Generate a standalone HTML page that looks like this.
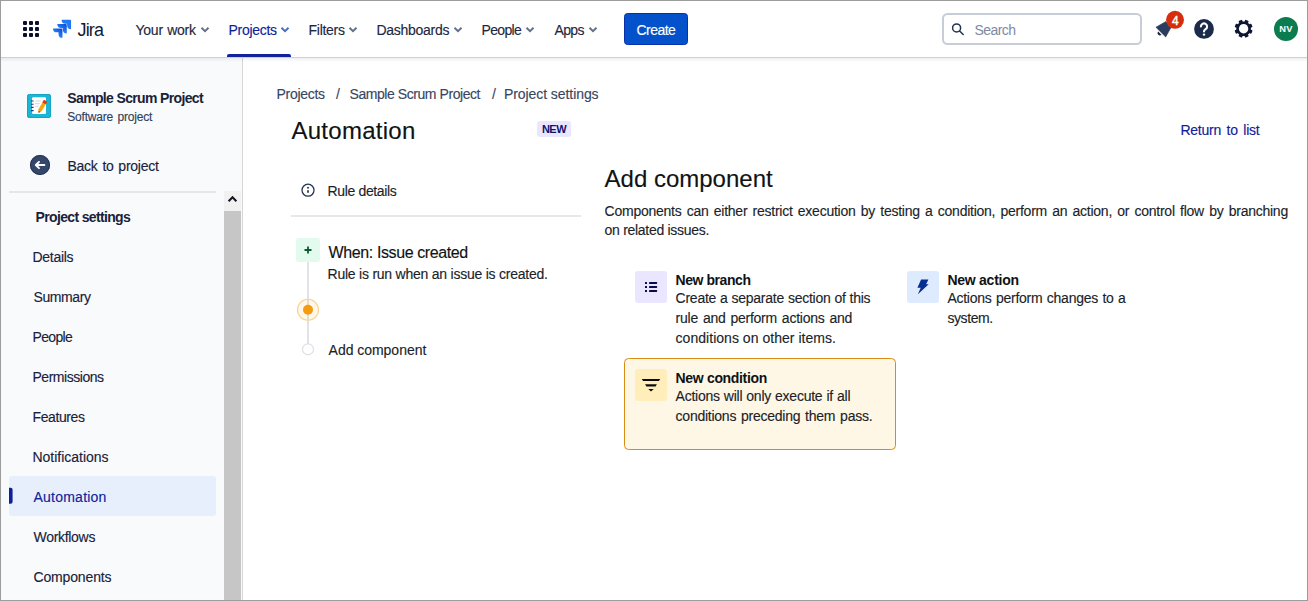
<!DOCTYPE html>
<html lang="en">
<head>
<meta charset="utf-8">
<title>Automation - Sample Scrum Project - Jira</title>
<style>
*{box-sizing:border-box;margin:0;padding:0}
html,body{width:1308px;height:601px;overflow:hidden;background:#fff}
body{font-family:"Liberation Sans",sans-serif;color:#172B4D;font-size:14px;position:relative}
.t{position:absolute;display:block;white-space:nowrap;line-height:1;z-index:10;font-weight:400;font-family:inherit;background:none;border:0;padding:0;margin:0;text-decoration:none;-webkit-text-stroke:.14px currentColor}
.a{position:absolute}
#frame{left:0;top:0;width:1308px;height:601px;border:1px solid #9c9c9c;z-index:50;pointer-events:none}
#nav{left:0;top:0;width:1308px;height:57px;background:#fff;z-index:5}
#navline{left:0;top:57px;width:1308px;height:1px;background:#cbd0da;z-index:6}
#navshadow{left:0;top:58px;width:1308px;height:4px;background:linear-gradient(rgba(9,30,66,.07),rgba(9,30,66,0));z-index:6}
#side{left:0;top:58px;width:242px;height:543px;background:#F9FAFC}
#sideline{left:242px;top:58px;width:1px;height:543px;background:#d6d6d6;z-index:3}
#sbtrack{left:224px;top:191px;width:17px;height:410px;background:#f1f1f1;z-index:2}
#sbthumb{left:224px;top:211px;width:17px;height:390px;background:#c6c6c6;z-index:3}
svg{position:absolute;overflow:visible;z-index:9}
</style>
</head>
<body>
<div class="a" id="side"></div>
<div class="a" id="sideline"></div>
<div class="a" id="sbtrack"></div>
<div class="a" id="sbthumb"></div>
<div class="a" id="nav"></div>
<div class="a" id="navline"></div>
<div class="a" id="navshadow"></div>

<!-- top nav shapes -->
<svg width="1308" height="58" style="left:0;top:0">
  <!-- app switcher grid -->
  <g fill="#0b0f2e">
    <rect x="23" y="21" width="4" height="4" rx="1"/><rect x="29" y="21" width="4" height="4" rx="1"/><rect x="35" y="21" width="4" height="4" rx="1"/>
    <rect x="23" y="27" width="4" height="4" rx="1"/><rect x="29" y="27" width="4" height="4" rx="1"/><rect x="35" y="27" width="4" height="4" rx="1"/>
    <rect x="23" y="33" width="4" height="4" rx="1"/><rect x="29" y="33" width="4" height="4" rx="1"/><rect x="35" y="33" width="4" height="4" rx="1"/>
  </g>
  <!-- Jira logo -->
  <defs>
    <linearGradient id="jg" x1="1" y1="0" x2="0.3" y2="0.8"><stop offset="0.1" stop-color="#0b4fd8"/><stop offset="1" stop-color="#2d8bff"/></linearGradient>
  </defs>
  <g transform="translate(52.65,18.2) scale(0.585)">
    <path fill="#1f7af5" d="M30.16 2.67H15.3a6.71 6.71 0 0 0 6.71 6.7h2.74V12a6.71 6.71 0 0 0 6.7 6.7V3.95a1.29 1.29 0 0 0-1.29-1.28z"/>
    <path fill="url(#jg)" d="M22.8 10.07H7.95a6.71 6.71 0 0 0 6.7 6.7h2.74v2.65a6.71 6.71 0 0 0 6.7 6.7V11.36a1.29 1.29 0 0 0-1.29-1.29z"/>
    <path fill="url(#jg)" d="M15.45 17.47H.6a6.71 6.71 0 0 0 6.7 6.71h2.75v2.64a6.71 6.71 0 0 0 6.69 6.7V18.76a1.29 1.29 0 0 0-1.29-1.29z"/>
  </g>
  <!-- chevrons -->
  <g fill="none" stroke="#657188" stroke-width="2" stroke-linecap="butt" stroke-linejoin="miter">
    <path d="M201.5 27.800l3.5 3.400 3.500-3.400"/>
    <path stroke="#4a6cc6" d="M281.5 27.800l3.5 3.400 3.500-3.400"/>
    <path d="M349.5 27.800l3.5 3.400 3.500-3.400"/>
    <path d="M454.5 27.800l3.5 3.400 3.500-3.400"/>
    <path d="M526.5 27.800l3.5 3.400 3.500-3.400"/>
    <path d="M589.5 27.800l3.5 3.400 3.500-3.400"/>
  </g>
  <!-- selected underline -->
  <path d="M227 57v-1a2 2 0 0 1 2-2h60a2 2 0 0 1 2 2v1z" fill="#14219c"/>
  <!-- create button -->
  <rect x="624.5" y="13.5" width="63" height="31" rx="3" fill="#0352cc" stroke="#0a2fa8" stroke-width="1"/>
  <!-- search box -->
  <rect x="943" y="14" width="198" height="30" rx="4.500" fill="#fff" stroke="#c8ccd6" stroke-width="2"/>
  <g fill="none" stroke="#22314f" stroke-width="1.500" stroke-linecap="round">
    <circle cx="956.600" cy="27.900" r="4"/><path d="M959.600 31l3.600 3.500"/>
  </g>
  <!-- bell -->
  <g transform="translate(1164.700,28.200) rotate(45)" fill="#2b3d5f">
    <path d="M-6.900 5.500L-3.800-5.500h7.600L6.900 5.500z" stroke="#2b3d5f" stroke-width=".6" stroke-linejoin="round"/>
    <path d="M-2.300 6.900h4.600a2.300 2.300 0 0 1-4.600 0z" fill="#1b2942"/>
  </g>
  <circle cx="1175" cy="19.800" r="9" fill="#d62e0c"/>
  <!-- help -->
  <circle cx="1204" cy="28.900" r="9.900" fill="#1c2b4a"/>
  <path d="M1200.900 26.500a3.100 3.100 0 1 1 4.700 2.700c-1 .6-1.600 1.100-1.600 2.300" fill="none" stroke="#fff" stroke-width="2.100" stroke-linecap="round"/>
  <circle cx="1204" cy="34.600" r="1.200" fill="#fff"/>
  <!-- gear -->
  <g transform="translate(1243.600,28.700) rotate(22.5)">
    <circle r="6" fill="none" stroke="#0f1733" stroke-width="2.600"/>
    <g fill="#0f1733">
      <rect x="-1.900" y="-9" width="3.800" height="3.400" rx=".8"/>
      <rect x="-1.900" y="-9" width="3.800" height="3.400" rx=".8" transform="rotate(45)"/>
      <rect x="-1.900" y="-9" width="3.800" height="3.400" rx=".8" transform="rotate(90)"/>
      <rect x="-1.900" y="-9" width="3.800" height="3.400" rx=".8" transform="rotate(135)"/>
      <rect x="-1.900" y="-9" width="3.800" height="3.400" rx=".8" transform="rotate(180)"/>
      <rect x="-1.900" y="-9" width="3.800" height="3.400" rx=".8" transform="rotate(225)"/>
      <rect x="-1.900" y="-9" width="3.800" height="3.400" rx=".8" transform="rotate(270)"/>
      <rect x="-1.900" y="-9" width="3.800" height="3.400" rx=".8" transform="rotate(315)"/>
    </g>
  </g>
  <!-- avatar -->
  <circle cx="1286" cy="28.900" r="12" fill="#0a7c50"/>
</svg>

<!-- sidebar shapes -->
<svg width="243" height="543" style="left:0;top:58px" viewBox="0 58 243 543">
  <!-- project avatar -->
  <rect x="27" y="94" width="24" height="24" rx="2.500" fill="#1bb6d6"/>
  <rect x="27.500" y="94.500" width="23" height="23" rx="2" fill="none" stroke="#14a5c6" stroke-width="1"/>
  <rect x="32" y="97.300" width="14" height="16.700" rx="1.200" fill="#fff"/>
  <g stroke="#1d3a7a" stroke-width="1.100"><path d="M31 101h2.600M31 104.200h2.600M31 107.400h2.600M31 110.600h2.600"/></g>
  <g stroke="#d4dbe6" stroke-width="1.100"><path d="M35.200 101h5.500M35.200 103.600h4.500M35.200 106.200h3.500"/></g>
  <g transform="translate(38.600,112.800) rotate(-60)">
    <path d="M0 0l2.800-1.900h9v3.800h-9z" fill="#f6a50e"/>
    <path d="M0 0l1.500-1v2z" fill="#3a2a1a"/>
    <rect x="10.800" y="-2" width="3.200" height="4" rx=".7" fill="#e03a1c"/>
  </g>
  <!-- back button -->
  <circle cx="40" cy="165" r="10" fill="#34466a"/>
  <circle cx="40" cy="165" r="9.600" fill="none" stroke="#1d2b4c" stroke-width=".8"/>
  <path d="M44.400 165h-8M39 161.800l-3.200 3.200 3.200 3.200" fill="none" stroke="#fff" stroke-width="1.900" stroke-linecap="round" stroke-linejoin="round"/>
  <!-- divider -->
  <rect x="9" y="191" width="207" height="2" fill="#e3e5e9"/>
  <!-- scroll arrow -->
  <path d="M228.600 201.300l3.900-4 3.900 4" fill="none" stroke="#14141e" stroke-width="2" stroke-linejoin="miter"/>
  <!-- selected item -->
  <rect x="9" y="476" width="207" height="40" rx="3" fill="#e7effc"/>
  <path d="M9 487.800h1.600a2 2 0 0 1 2 2v12a2 2 0 0 1-2 2H9z" fill="#10209c"/>
</svg>

<!-- main shapes -->
<svg width="1065" height="543" style="left:243px;top:58px" viewBox="243 58 1065 543">
  <!-- NEW lozenge -->
  <rect x="537" y="121" width="34" height="16" rx="3" fill="#eae6ff"/>
  <!-- info icon -->
  <circle cx="308" cy="190.200" r="6" fill="none" stroke="#22314f" stroke-width="1.250"/>
  <path d="M308 190.200v2.600" stroke="#22314f" stroke-width="1.700" stroke-linecap="butt"/>
  <circle cx="308" cy="187.700" r=".95" fill="#22314f"/>
  <!-- divider -->
  <rect x="291" y="215" width="290" height="2" fill="#e5e7eb"/>
  <!-- flow line -->
  <rect x="307" y="261" width="2" height="84" fill="#e0e2e7"/>
  <!-- trigger box -->
  <rect x="296" y="238" width="24" height="24" rx="3" fill="#e2fbee"/>
  <path d="M304.500 250h7M308 246.500v7" stroke="#0a5c2e" stroke-width="1.800" stroke-linecap="butt"/>
  <!-- active dot -->
  <circle cx="308" cy="309.700" r="10.500" fill="#ffab00" fill-opacity=".09" stroke="#f8d28f" stroke-width="1.100"/>
  <circle cx="308" cy="309.700" r="5" fill="#f49b10"/>
  <!-- empty dot -->
  <circle cx="308" cy="349.300" r="5.500" fill="#fff" stroke="#dcdfe4" stroke-width="1.200"/>
  <!-- New branch -->
  <rect x="635" y="271" width="32" height="32" rx="3" fill="#eae6ff"/>
  <g fill="#0a0a4c">
    <rect x="645" y="282" width="2" height="2" rx=".3"/><rect x="649" y="282" width="8.100" height="2" rx=".4"/>
    <rect x="645" y="286" width="2" height="2" rx=".3"/><rect x="649" y="286" width="8.100" height="2" rx=".4"/>
    <rect x="645" y="290" width="2" height="2" rx=".3"/><rect x="649" y="290" width="8.100" height="2" rx=".4"/>
  </g>
  <!-- New action -->
  <rect x="907" y="271" width="32" height="32" rx="3" fill="#deebff"/>
  <path d="M921.100 279.600h7.300l-2.300 4.700h2.600l-10.800 10 2.800-6.500h-3.300z" fill="#062f8f"/>
  <!-- New condition -->
  <rect x="624.500" y="358.500" width="271" height="91" rx="4" fill="#fff7e6" stroke="#d98c14" stroke-width="1"/>
  <rect x="635" y="369" width="32" height="32" rx="3" fill="#ffeeba"/>
  <g fill="#0c0c0e">
    <path d="M641.800 378.900h18.400l-1.300 2.200h-15.800z"/>
    <path d="M645.100 384.200h11.800l-1.300 2.200h-9.200z"/>
    <path d="M648.300 389h5.400l-2.700 2.500z"/>
  </g>
</svg>

<header>
  <span class="t" style="left:77.50px;top:20.76px;font-size:18px;color:#141a33;letter-spacing:-0.831px;font-weight:400;-webkit-text-stroke:0">Jira</span>
  <a class="t" style="left:135.50px;top:23.15px;font-size:14px;color:#1d2740;letter-spacing:-0.250px;word-spacing:0.765px">Your work</a>
  <a class="t" style="left:228.50px;top:23.15px;font-size:14px;color:#10229a;letter-spacing:-0.296px">Projects</a>
  <a class="t" style="left:308.50px;top:23.15px;font-size:14px;color:#1d2740;letter-spacing:-0.268px">Filters</a>
  <a class="t" style="left:376.50px;top:23.15px;font-size:14px;color:#1d2740;letter-spacing:-0.277px">Dashboards</a>
  <a class="t" style="left:481.50px;top:23.15px;font-size:14px;color:#1d2740;letter-spacing:-0.661px">People</a>
  <a class="t" style="left:554.50px;top:23.15px;font-size:14px;color:#1d2740;letter-spacing:-0.637px">Apps</a>
  <button class="t" style="left:636.50px;top:23.15px;font-size:14px;color:#ffffff;letter-spacing:-0.547px">Create</button>
  <span class="t" style="left:974.60px;top:23.15px;font-size:14px;color:#7f8aa0;letter-spacing:-0.574px;font-weight:400;-webkit-text-stroke:0">Search</span>
  <span class="t" style="left:1172.00px;top:14.64px;font-size:12px;color:#ffffff;letter-spacing:0.000px;-webkit-text-stroke:.4px #fff">4</span>
  <span class="t" style="left:1279.30px;top:24.83px;font-size:9.3px;color:#ffffff;letter-spacing:0.186px;font-weight:700;-webkit-text-stroke:0">NV</span>
</header>
<aside>
  <strong class="t" style="left:67.30px;top:90.65px;font-size:14px;color:#1a2238;letter-spacing:-0.645px;font-weight:700;-webkit-text-stroke:0">Sample Scrum Project</strong>
  <span class="t" style="left:67.30px;top:111.04px;font-size:12px;color:#333f5a;letter-spacing:-0.214px;word-spacing:1.541px">Software project</span>
  <a class="t" style="left:67.50px;top:159.15px;font-size:14px;color:#18223a;letter-spacing:-0.250px;word-spacing:1.145px">Back to project</a>
  <h2 class="t" style="left:35.50px;top:209.75px;font-size:14px;color:#1a2238;letter-spacing:-0.649px;font-weight:700;-webkit-text-stroke:0">Project settings</h2>
  <a class="t" style="left:32.50px;top:250.15px;font-size:14px;color:#18223a;letter-spacing:-0.299px">Details</a>
  <a class="t" style="left:33.50px;top:290.15px;font-size:14px;color:#18223a;letter-spacing:-0.399px">Summary</a>
  <a class="t" style="left:32.50px;top:330.15px;font-size:14px;color:#18223a;letter-spacing:-0.661px">People</a>
  <a class="t" style="left:32.50px;top:370.15px;font-size:14px;color:#18223a;letter-spacing:-0.474px">Permissions</a>
  <a class="t" style="left:32.50px;top:410.15px;font-size:14px;color:#18223a;letter-spacing:-0.393px">Features</a>
  <a class="t" style="left:32.50px;top:450.15px;font-size:14px;color:#18223a;letter-spacing:-0.021px">Notifications</a>
  <a class="t" style="left:33.50px;top:490.15px;font-size:14px;color:#10229a;letter-spacing:0.230px">Automation</a>
  <a class="t" style="left:33.50px;top:530.15px;font-size:14px;color:#18223a;letter-spacing:-0.301px">Workflows</a>
  <a class="t" style="left:33.50px;top:570.15px;font-size:14px;color:#18223a;letter-spacing:-0.153px">Components</a>
</aside>
<main>
  <a class="t" style="left:276.50px;top:86.85px;font-size:14px;color:#39465f;letter-spacing:-0.296px">Projects</a>
  <span class="t" style="left:336.00px;top:86.85px;font-size:14px;color:#39465f;letter-spacing:0.000px">/</span>
  <a class="t" style="left:349.50px;top:86.85px;font-size:14px;color:#39465f;letter-spacing:-0.436px">Sample Scrum Project</a>
  <span class="t" style="left:492.00px;top:86.85px;font-size:14px;color:#39465f;letter-spacing:0.000px">/</span>
  <a class="t" style="left:504.00px;top:86.85px;font-size:14px;color:#39465f;letter-spacing:-0.074px">Project settings</a>
  <h1 class="t" style="left:291.40px;top:118.68px;font-size:24px;color:#101214;letter-spacing:0.282px">Automation</h1>
  <span class="t" style="left:541.90px;top:123.69px;font-size:11px;color:#12126a;letter-spacing:-0.490px;font-weight:700;-webkit-text-stroke:0">NEW</span>
  <a class="t" style="left:1180.40px;top:122.95px;font-size:14px;color:#10229a;letter-spacing:-0.250px;word-spacing:1.977px">Return to list</a>
  <a class="t" style="left:327.60px;top:183.75px;font-size:14px;color:#1b1f2a;letter-spacing:-0.359px">Rule details</a>
  <h3 class="t" style="left:328.60px;top:244.66px;font-size:16px;color:#101214;letter-spacing:-0.397px">When: Issue created</h3>
  <p class="t" style="left:327.60px;top:267.15px;font-size:14px;color:#1b1f2a;letter-spacing:-0.250px;word-spacing:0.072px">Rule is run when an issue is created.</p>
  <p class="t" style="left:328.60px;top:342.75px;font-size:14px;color:#1b1f2a;letter-spacing:-0.032px">Add component</p>
  <h2 class="t" style="left:604.60px;top:166.68px;font-size:24px;color:#101214;letter-spacing:-0.004px">Add component</h2>
  <p class="t" style="left:604.60px;top:203.55px;font-size:14px;color:#1b1f2a;letter-spacing:-0.250px;word-spacing:1.610px">Components can either restrict execution by testing a condition, perform an action, or control flow by branching</p>
  <p class="t" style="left:604.60px;top:223.15px;font-size:14px;color:#1b1f2a;letter-spacing:-0.297px">on related issues.</p>
  <h3 class="t" style="left:675.60px;top:272.85px;font-size:14px;color:#101214;letter-spacing:-0.444px;font-weight:700;-webkit-text-stroke:0">New branch</h3>
  <p class="t" style="left:675.60px;top:291.15px;font-size:14px;color:#1b1f2a;letter-spacing:-0.250px;word-spacing:0.288px">Create a separate section of this</p>
  <p class="t" style="left:675.60px;top:311.15px;font-size:14px;color:#1b1f2a;letter-spacing:-0.250px;word-spacing:1.306px">rule and perform actions and</p>
  <p class="t" style="left:675.60px;top:330.85px;font-size:14px;color:#1b1f2a;letter-spacing:0.030px">conditions on other items.</p>
  <h3 class="t" style="left:947.40px;top:272.85px;font-size:14px;color:#101214;letter-spacing:-0.250px;font-weight:700;-webkit-text-stroke:0">New action</h3>
  <p class="t" style="left:947.40px;top:291.15px;font-size:14px;color:#1b1f2a;letter-spacing:-0.250px;word-spacing:0.760px">Actions perform changes to a</p>
  <p class="t" style="left:947.40px;top:311.15px;font-size:14px;color:#1b1f2a;letter-spacing:-0.406px">system.</p>
  <h3 class="t" style="left:675.60px;top:370.75px;font-size:14px;color:#101214;letter-spacing:-0.334px;font-weight:700;-webkit-text-stroke:0">New condition</h3>
  <p class="t" style="left:675.60px;top:389.15px;font-size:14px;color:#1b1f2a;letter-spacing:-0.250px;word-spacing:0.427px">Actions will only execute if all</p>
  <p class="t" style="left:675.60px;top:408.75px;font-size:14px;color:#1b1f2a;letter-spacing:-0.250px;word-spacing:1.235px">conditions preceding them pass.</p>
</main>
<div class="a" id="frame"></div>
</body>
</html>
